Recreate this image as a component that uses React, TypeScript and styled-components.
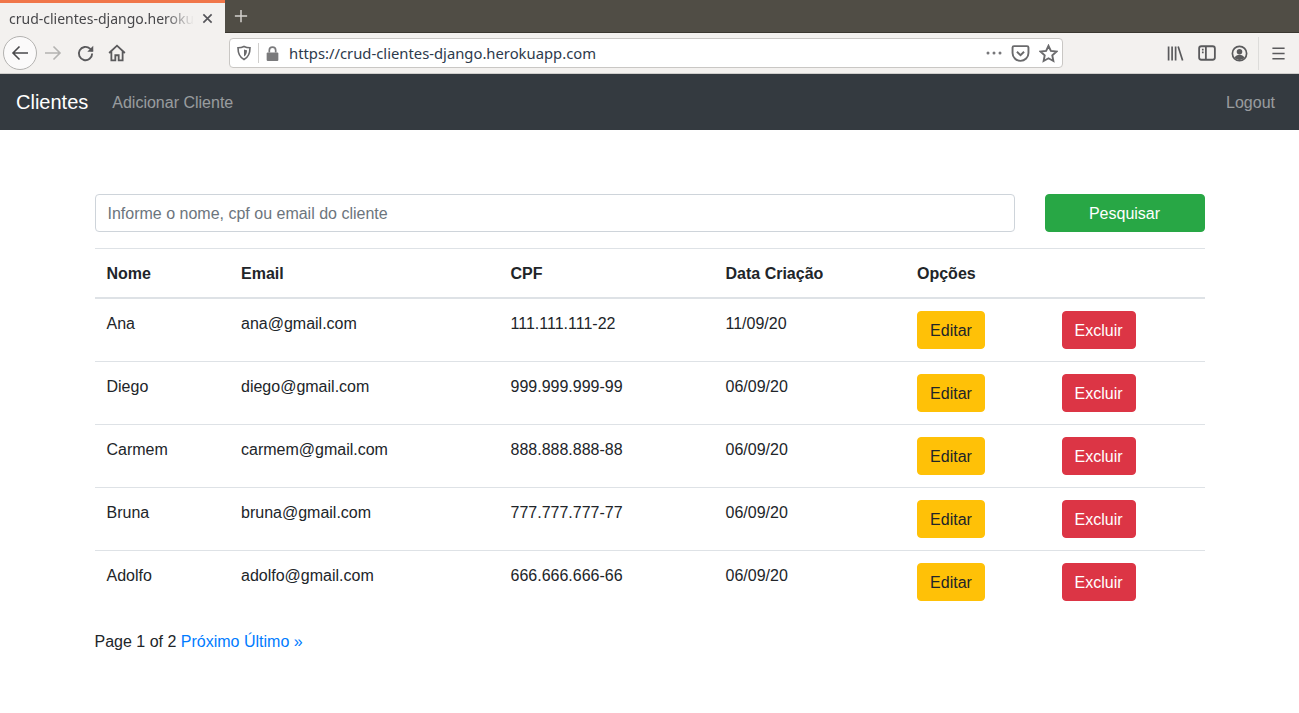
import styled, {createGlobalStyle} from 'styled-components'

const clientes = [
  {nome: 'Ana', email: 'ana@gmail.com', cpf: '111.111.111-22', data: '11/09/20'},
  {nome: 'Diego', email: 'diego@gmail.com', cpf: '999.999.999-99', data: '06/09/20'},
  {nome: 'Carmem', email: 'carmem@gmail.com', cpf: '888.888.888-88', data: '06/09/20'},
  {nome: 'Bruna', email: 'bruna@gmail.com', cpf: '777.777.777-77', data: '06/09/20'},
  {nome: 'Adolfo', email: 'adolfo@gmail.com', cpf: '666.666.666-66', data: '06/09/20'},
]

const colWidths = [134.5, 269.5, 215, 191.5, 144.5, 155]

const App = () => (
  <>
    <GlobalStyle />
    <Browser>
      <TabStrip>
        <Tab>
          <TabTitle>crud-clientes-django.heroku</TabTitle>
          <TabClose viewBox="0 0 12 12" aria-hidden>
            <path d="M1.5 1.5l9 9M10.5 1.5l-9 9" />
          </TabClose>
        </Tab>
        <NewTab viewBox="0 0 16 16" aria-hidden>
          <path d="M8 1v14M1 8h14" />
        </NewTab>
      </TabStrip>
      <Toolbar>
        <BackButton>
          <IconSvg viewBox="0 0 20 20" $color="#4a4a4c" $size={20}>
            <path d="M18 10H3M9.5 3.5L3 10l6.500 6.500" />
          </IconSvg>
        </BackButton>
        <NavIcon $width={32}>
          <IconSvg viewBox="0 0 20 20" $color="#b4b3b1" $size={20}>
            <path d="M2 10h15M10.500 3.500L17 10l-6.500 6.500" />
          </IconSvg>
        </NavIcon>
        <NavIcon $width={32}>
          <IconSvg viewBox="0 0 16 16" $color="#5a5a5c" $size={19}>
            <path d="M13.600 8A5.600 5.600 0 1 1 11.800 3.900L14 6" />
            <path d="M14.500 1.500V6.500H9.500" fill="#5a5a5c" strokeWidth="0" />
          </IconSvg>
        </NavIcon>
        <NavIcon $width={32}>
          <IconSvg viewBox="0 0 16 16" $color="#5a5a5c" $size={18}>
            <path d="M1 8l7-6.500L15 8M3 6.500V14.500h3.500V10h3v4.500H13V6.500" />
          </IconSvg>
        </NavIcon>
        <UrlBar>
          <IconSvg viewBox="0 0 16 16" $color="#6a6a6c">
            <path d="M8 1.500c2 1 4 1.300 6 1.300 0 5.700-1.500 9.500-6 11.700-4.500-2.200-6-6-6-11.700 2 0 4-.3 6-1.300z" />
            <path d="M8 4.500c1 .4 2 .6 3 .7 0 3-.8 5-3 6.300z" fill="#6a6a6c" strokeWidth="0" />
          </IconSvg>
          <UrlDivider />
          <IconSvg viewBox="0 0 16 16" $color="#7a7a7c" $size={17}>
            <path d="M5 7V5a3 3 0 0 1 6 0v2" />
            <rect x="2.500" y="7" width="11" height="8" rx="1" fill="#7a7a7c" strokeWidth="0" />
          </IconSvg>
          <UrlText>https://crud-clientes-django.herokuapp.com</UrlText>
          <UrlActions>
            <IconSvg viewBox="0 0 16 6" $color="#77777a" $size={16}>
              <circle cx="2" cy="3" r="1.500" fill="#77777a" strokeWidth="0" />
              <circle cx="8" cy="3" r="1.500" fill="#77777a" strokeWidth="0" />
              <circle cx="14" cy="3" r="1.500" fill="#77777a" strokeWidth="0" />
            </IconSvg>
            <IconSvg viewBox="0 0 16 16" $color="#6a6a6c" $size={19}>
              <path d="M2.500 1.800h11c.7 0 1.200.5 1.200 1.200v4.500c0 3.700-3 6.700-6.700 6.700S1.300 11.200 1.300 7.500V3c0-.7.5-1.200 1.200-1.200z" />
              <path d="M5 6.500l3 3 3-3" />
            </IconSvg>
            <IconSvg viewBox="0 0 16 16" $color="#6a6a6c" $size={19}>
              <path d="M8 1.500l2 4.300 4.700.6-3.500 3.200.9 4.700L8 12l-4.100 2.300.9-4.700L1.300 6.400 6 5.800z" />
            </IconSvg>
          </UrlActions>
        </UrlBar>
        <ToolGroup>
          <NavIcon $width={32}>
            <IconSvg viewBox="0 0 16 16" $color="#5a5a5c" $size={17}>
              <path d="M1.500 1.500v13M4.800 1.500v13M8.100 1.500v13M10.500 1.500l4.200 13" />
            </IconSvg>
          </NavIcon>
          <NavIcon $width={32}>
            <IconSvg viewBox="0 0 16 16" $color="#5a5a5c" $size={18}>
              <rect x="1" y="2" width="14" height="12" rx="2" />
              <path d="M7 2v12M3.500 5h1.500M3.500 7.500h1.500" />
            </IconSvg>
          </NavIcon>
          <NavIcon $width={32}>
            <IconSvg viewBox="0 0 16 16" $color="#5a5a5c" $size={17}>
              <circle cx="8" cy="8" r="6.700" />
              <circle cx="8" cy="6.300" r="2.600" fill="#5a5a5c" strokeWidth="0" />
              <path d="M3.500 12c.8-2 2.500-2.800 4.500-2.800s3.700.8 4.500 2.800c-1.200 1.300-2.800 2-4.500 2s-3.300-.7-4.500-2z" fill="#5a5a5c" strokeWidth="0" />
            </IconSvg>
          </NavIcon>
          <ToolDivider />
          <NavIcon $width={39}>
            <IconSvg viewBox="0 0 16 16" $color="#5a5a5c" $size={15}>
              <path d="M1.500 2.500h13M1.500 8h13M1.500 13.500h13" />
            </IconSvg>
          </NavIcon>
        </ToolGroup>
      </Toolbar>
    </Browser>

    <Navbar>
      <Brand href="#">Clientes</Brand>
      <NavLink href="#">Adicionar Cliente</NavLink>
      <NavLink href="#" $right>
        Logout
      </NavLink>
    </Navbar>

    <Container>
      <SearchForm>
        <SearchInput placeholder="Informe o nome, cpf ou email do cliente" />
        <Button $variant="success" $wide type="button">
          Pesquisar
        </Button>
      </SearchForm>

      <Table>
        <colgroup>
          {colWidths.map((w, i) => (
            <Col key={i} style={{width: w}} />
          ))}
        </colgroup>
        <thead>
          <tr>
            <Th>Nome</Th>
            <Th>Email</Th>
            <Th>CPF</Th>
            <Th>Data Criação</Th>
            <Th>Opções</Th>
            <Th />
          </tr>
        </thead>
        <tbody>
          {clientes.map(c => (
            <tr key={c.email}>
              <Td>{c.nome}</Td>
              <Td>{c.email}</Td>
              <Td>{c.cpf}</Td>
              <Td>{c.data}</Td>
              <Td>
                <Button $variant="warning" type="button">
                  Editar
                </Button>
              </Td>
              <Td>
                <Button $variant="danger" type="button">
                  Excluir
                </Button>
              </Td>
            </tr>
          ))}
        </tbody>
      </Table>

      <Pagination>
        Page 1 of 2 <PageLink href="#">Próximo</PageLink> <PageLink href="#">Último »</PageLink>
      </Pagination>
    </Container>
  </>
)

export default App

const GlobalStyle = createGlobalStyle`
  html, body {
    margin: 0;
    padding: 0;
    background: #fff;
  }

  body {
    color: #212529;
    font-family: "Liberation Sans", Arial, sans-serif;
    font-size: 16px;
    line-height: 1.5;
  }

  * {
    box-sizing: border-box;
  }
`

const Browser = styled.header`
  display: flex;
  flex-direction: column;
  height: 74px;
  background: #f3f1ef;
`

const TabStrip = styled.div`
  display: flex;
  align-items: center;
  height: 33px;
  background: #504d45;
  border-bottom: 1px solid #3a3730;
`

const Tab = styled.div`
  display: flex;
  align-items: center;
  width: 225px;
  height: 33px;
  padding: 2px 12px 0 9px;
  border-top: 3px solid #f0764a;
  background: #f3f1ef;
`

const TabTitle = styled.span`
  color: #47474a;
  font-family: "Noto Sans", sans-serif;
  font-size: 14px;
  line-height: 20px;
  white-space: nowrap;
  -webkit-mask-image: linear-gradient(to right, #000 84%, transparent 100%);
  mask-image: linear-gradient(to right, #000 84%, transparent 100%);
`

const TabClose = styled.svg`
  width: 11px;
  height: 11px;
  margin-left: auto;
  fill: none;
  stroke: #55555a;
  stroke-width: 1.8;
`

const NewTab = styled.svg`
  width: 14px;
  height: 14px;
  margin-left: 9px;
  fill: none;
  stroke: #d4d2ce;
  stroke-width: 1.7;
`

const Toolbar = styled.div`
  display: flex;
  align-items: center;
  height: 41px;
  padding-left: 3px;
  border-bottom: 1px solid #cfcecc;
`

const BackButton = styled.div`
  display: grid;
  flex: 0 0 34px;
  height: 34px;
  place-items: center;
  border: 1px solid #b3b2b0;
  border-radius: 50%;
  background: #fbfafa;
`

const NavIcon = styled.div<{$width: number}>`
  display: grid;
  width: ${p => p.$width}px;
  height: 32px;
  flex: 0 0 auto;
  place-items: center;
`

const IconSvg = styled.svg<{$color: string; $size?: number}>`
  display: block;
  width: ${p => p.$size ?? 16}px;
  height: ${p => p.$size ?? 16}px;
  flex: 0 0 auto;
  fill: none;
  stroke: ${p => p.$color};
  stroke-width: 1.6;
`

const UrlBar = styled.div`
  display: flex;
  flex: 0 0 834px;
  align-items: center;
  height: 30px;
  margin-left: 96px;
  padding: 0 4px 0 6px;
  border: 1px solid #c9c7c4;
  border-radius: 4px;
  background: #fff;
`

const UrlDivider = styled.span`
  width: 1px;
  height: 20px;
  margin: 0 5px 0 6px;
  background: #d0cfcd;
`

const UrlText = styled.span`
  flex: 1;
  margin-left: 8px;
  color: #2d3a4c;
  font-family: "Noto Sans", sans-serif;
  font-size: 14.800px;
  line-height: 20px;
  white-space: nowrap;
`

const UrlActions = styled.div`
  display: flex;
  align-items: center;
  gap: 9px;
`

const ToolGroup = styled.div`
  display: flex;
  flex: 0 0 auto;
  align-items: center;
  margin-left: 96px;
`

const ToolDivider = styled.span`
  width: 1px;
  height: 33px;
  margin-left: 3px;
  background: #dddcda;
`

const Navbar = styled.nav`
  display: flex;
  align-items: center;
  height: 56px;
  padding: 8px 16px;
  background: #343a40;
`

const Brand = styled.a`
  margin-right: 16px;
  padding: 5px 0;
  color: #fff;
  font-size: 20px;
  line-height: 30px;
  text-decoration: none;
`

const NavLink = styled.a<{$right?: boolean}>`
  margin-left: ${p => (p.$right ? 'auto' : '0')};
  padding: 9px 8px 7px;
  color: rgba(255, 255, 255, 0.5);
  text-decoration: none;
`

const Container = styled.main`
  width: 1110px;
  margin: 0 auto;
  padding-top: 64px;
`

const SearchForm = styled.form`
  display: flex;
  gap: 30px;
  margin-bottom: 16px;
`

const SearchInput = styled.input`
  flex: 1;
  height: 38px;
  padding: 7px 12px 5px;
  border: 1px solid #ced4da;
  border-radius: 4px;
  color: #495057;
  font-family: inherit;
  font-size: 16px;

  &::placeholder {
    color: #6c757d;
    opacity: 1;
  }
`

const buttonColors = {
  success: {bg: '#28a745', fg: '#fff'},
  warning: {bg: '#ffc107', fg: '#212529'},
  danger: {bg: '#dc3545', fg: '#fff'},
}

const Button = styled.button<{$variant: keyof typeof buttonColors; $wide?: boolean}>`
  width: ${p => (p.$wide ? '160px' : 'auto')};
  min-width: 68px;
  height: 38px;
  padding: 7px 12px 5px;
  border: 1px solid ${p => buttonColors[p.$variant].bg};
  border-radius: 4px;
  background: ${p => buttonColors[p.$variant].bg};
  color: ${p => buttonColors[p.$variant].fg};
  font-family: inherit;
  font-size: 16px;
  line-height: 24px;
  cursor: pointer;
`

const Table = styled.table`
  width: 1110px;
  margin-bottom: 17px;
  border-collapse: collapse;
  table-layout: fixed;
`

const Col = styled.col``

const Th = styled.th`
  padding: 13px 12px 11px;
  border-top: 1px solid #dee2e6;
  border-bottom: 2px solid #dee2e6;
  font-weight: 700;
  text-align: left;
  vertical-align: bottom;
`

const Td = styled.td`
  padding: 13px 12px 11px;
  border-top: 1px solid #dee2e6;
  vertical-align: top;

  &:nth-child(n + 5) {
    padding-top: 12px;
    padding-bottom: 12px;
  }
`

const Pagination = styled.div`
  line-height: 24px;
`

const PageLink = styled.a`
  color: #007bff;
  text-decoration: none;
`
